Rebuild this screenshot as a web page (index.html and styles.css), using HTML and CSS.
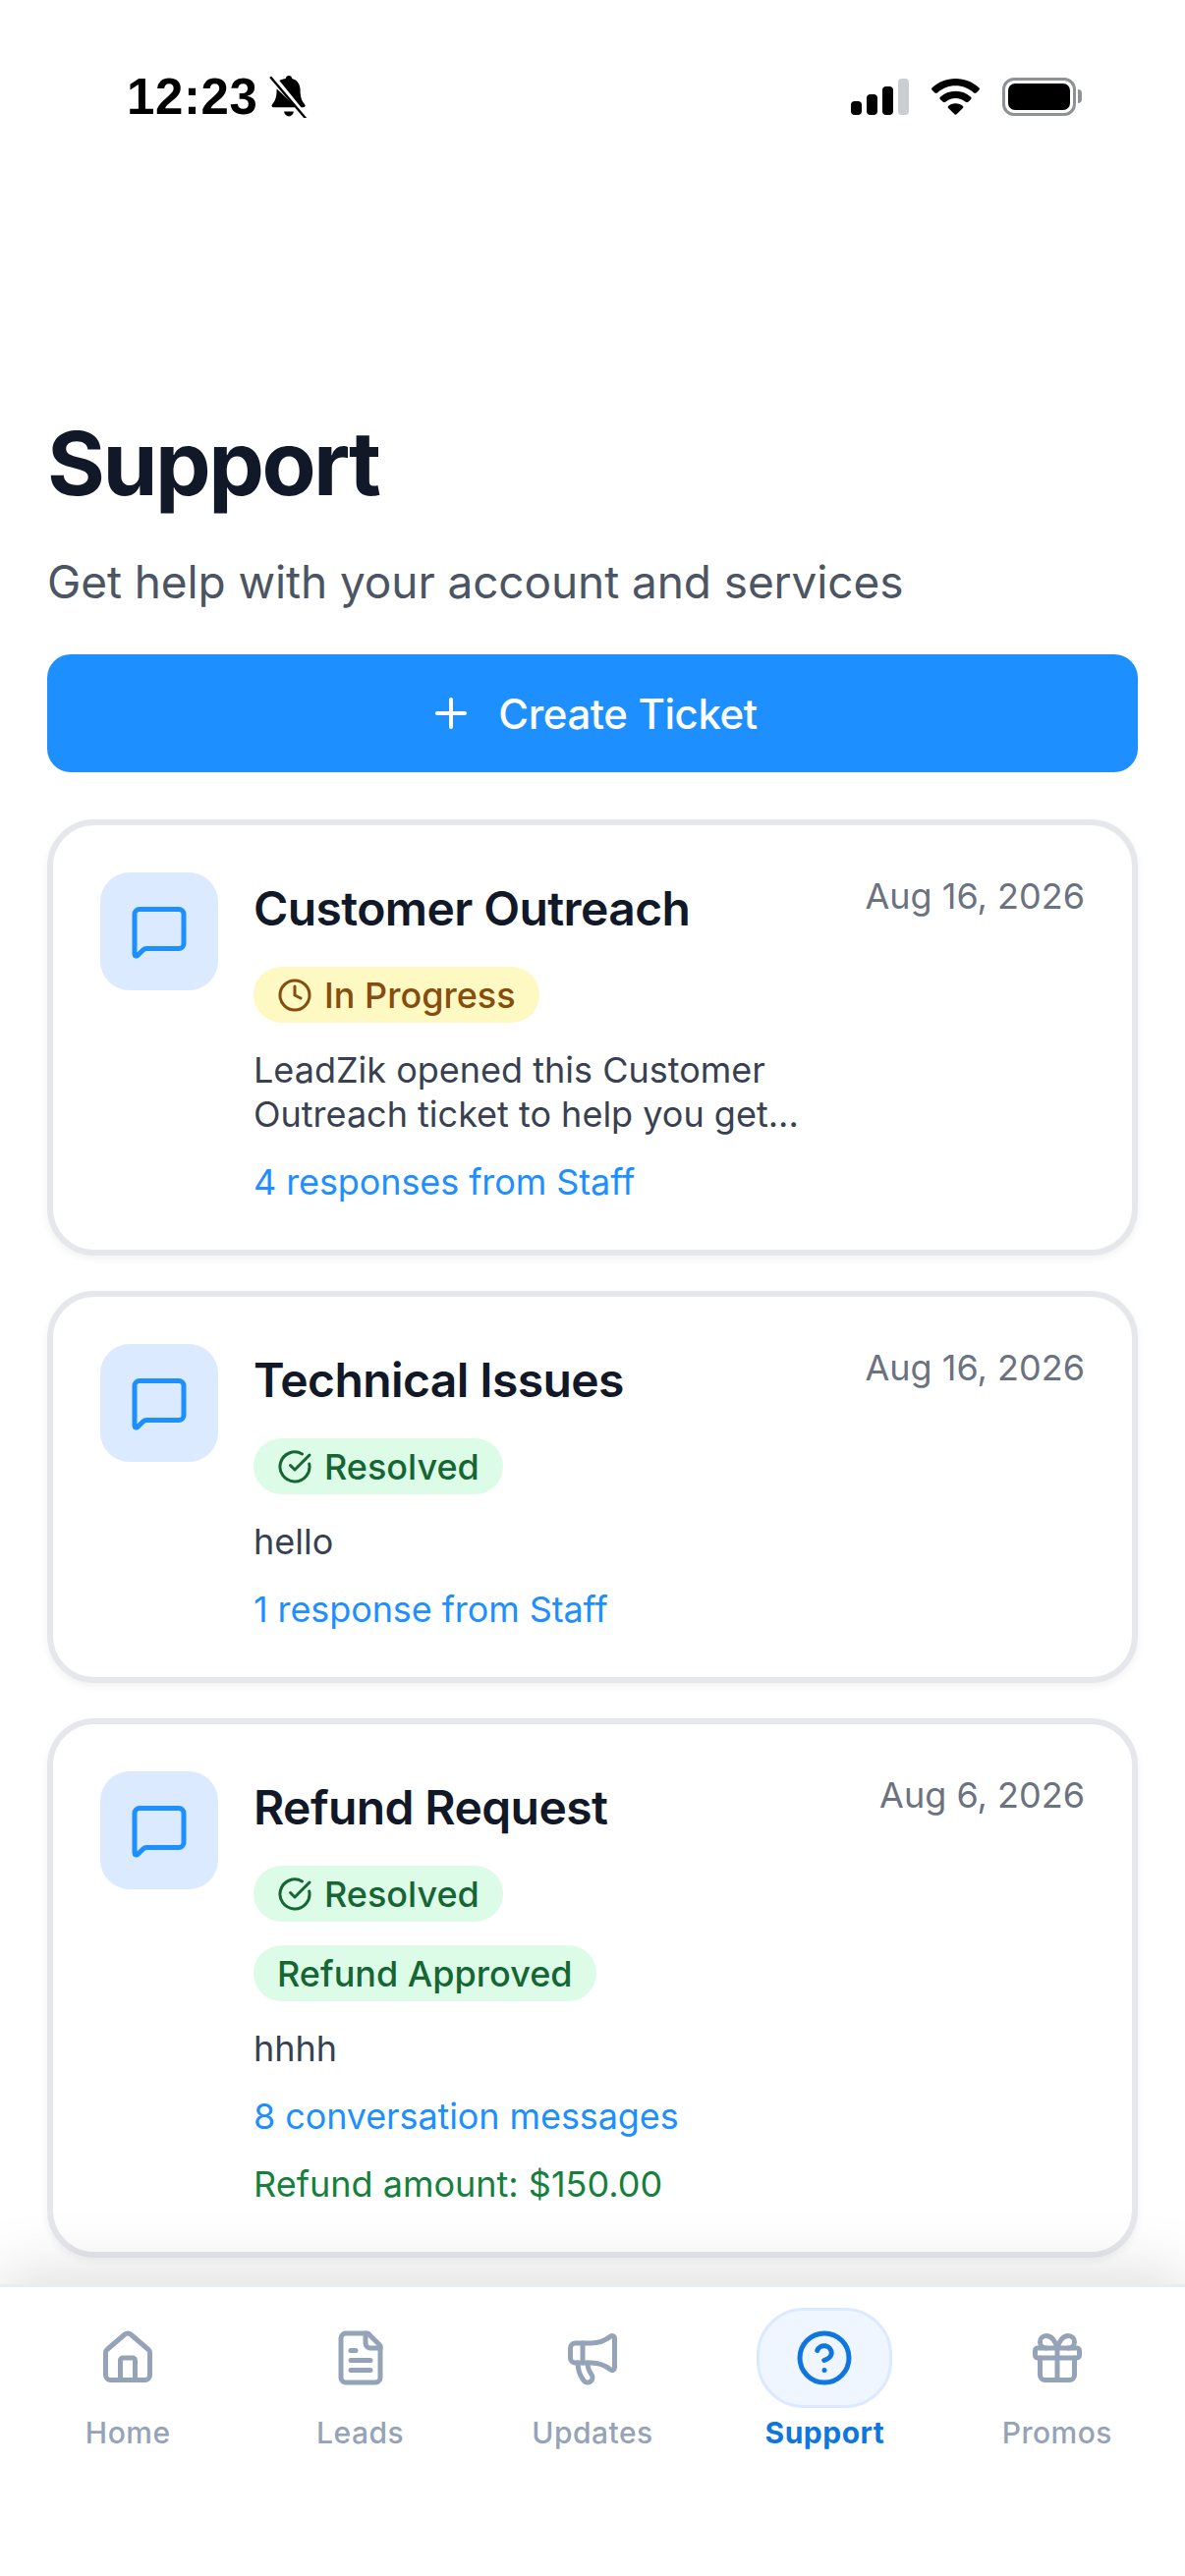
FILE: index.html
```html
<!DOCTYPE html>
<html lang="en">
<head>
    <meta charset="UTF-8">
    <meta name="viewport" content="width=device-width, initial-scale=1.0">
    <title>Support</title>
    <link rel="stylesheet" href="styles.css">
</head>
<body>
    <div class="status-bar">
        <div class="status-left">
            <span class="clock">12:23</span>
            <svg class="bell" viewBox="1.500 0 17 20.500" width="40" height="44">
                <path d="M10 .5c.9 0 1.400.6 1.500 1.400 2.500.6 3.900 2.700 3.900 5.600 0 3.600.9 5.200 2.100 6.600.5.600.2 1.400-.6 1.400h-1.100L5.500 2.800C6.300 2.300 7.500 2 8.500 1.900 8.600 1.100 9.100.5 10 .5z" fill="#000"/>
                <path d="M4.300 6.700c-.1.300-.1.600-.1.800 0 3.600-.9 5.200-2.100 6.600-.5.600-.2 1.400.6 1.400h10.900z" fill="#000"/>
                <path d="M7.700 17.500h4.600c-.2 1.400-1.200 2.300-2.300 2.300s-2.100-.9-2.300-2.300z" fill="#000"/>
                <path d="M1.200 1l17 20" stroke="#000" stroke-width="1.100" fill="none"/>
            </svg>
        </div>
        <div class="status-right">
            <div class="signal">
                <span class="bar bar-1"></span>
                <span class="bar bar-2"></span>
                <span class="bar bar-3"></span>
                <span class="bar bar-4"></span>
            </div>
            <svg class="wifi" viewBox="0 0 24 18" width="51" height="37" preserveAspectRatio="none">
                <path d="M12 0C7.500 0 3.700 1.700.8 4.500c-.4.300-.4.800 0 1.200L2.100 7c.3.300.8.300 1.200 0C5.600 4.800 8.600 3.500 12 3.500S18.400 4.800 20.700 7c.4.300.9.300 1.200 0l1.300-1.300c.4-.4.400-.9 0-1.200C20.300 1.700 16.500 0 12 0z" fill="#000"/>
                <path d="M12 6.200c-2.900 0-5.400 1.100-7.300 2.900-.4.300-.4.800 0 1.200l1.300 1.300c.3.300.8.300 1.200 0 1.300-1.100 3-1.900 4.800-1.900s3.500.8 4.800 1.900c.4.300.9.300 1.200 0l1.300-1.300c.4-.4.400-.9 0-1.200-1.900-1.800-4.400-2.900-7.300-2.900z" fill="#000"/>
                <path d="M12 12.300c-1.400 0-2.600.5-3.500 1.300-.3.300-.3.700 0 1l3 3c.3.300.7.300 1 0l3-3c.3-.3.300-.7 0-1-.9-.8-2.100-1.300-3.500-1.300z" fill="#000"/>
            </svg>
            <div class="battery">
                <div class="battery-shell"><div class="battery-fill"></div></div>
                <div class="battery-cap"></div>
            </div>
        </div>
    </div>

    <main class="content">
        <h1>Support</h1>
        <p class="subtitle">Get help with your account and services</p>

        <button class="create-btn" type="button">
            <svg viewBox="0 0 24 24" width="48" height="48" fill="none" stroke="#fff" stroke-width="2" stroke-linecap="round">
                <path d="M5 12h14M12 5v14"/>
            </svg>
            <span>Create Ticket</span>
        </button>

        <article class="ticket">
            <div class="ticket-icon">
                <svg viewBox="0 0 24 24" width="60" height="60" fill="none" stroke="#1e8fff" stroke-width="2" stroke-linecap="round" stroke-linejoin="round">
                    <path d="M22 17a2 2 0 0 1-2 2H6.828a2 2 0 0 0-1.414.586l-2.202 2.202A.71.71 0 0 1 2 21.286V5a2 2 0 0 1 2-2h16a2 2 0 0 1 2 2z"/>
                </svg>
            </div>
            <div class="ticket-body">
                <div class="ticket-head">
                    <h2>Customer Outreach</h2>
                    <span class="date">Aug 16, 2026</span>
                </div>
                <div class="badge badge-progress">
                    <svg viewBox="0 0 24 24" width="36" height="36" fill="none" stroke="currentColor" stroke-width="2" stroke-linecap="round" stroke-linejoin="round">
                        <circle cx="12" cy="12" r="10"/><path d="M12 6v6l4 2"/>
                    </svg>
                    <span>In Progress</span>
                </div>
                <p class="desc">LeadZik opened this Customer<br>Outreach ticket to help you get...</p>
                <p class="link">4 responses from Staff</p>
            </div>
        </article>

        <article class="ticket">
            <div class="ticket-icon">
                <svg viewBox="0 0 24 24" width="60" height="60" fill="none" stroke="#1e8fff" stroke-width="2" stroke-linecap="round" stroke-linejoin="round">
                    <path d="M22 17a2 2 0 0 1-2 2H6.828a2 2 0 0 0-1.414.586l-2.202 2.202A.71.71 0 0 1 2 21.286V5a2 2 0 0 1 2-2h16a2 2 0 0 1 2 2z"/>
                </svg>
            </div>
            <div class="ticket-body">
                <div class="ticket-head">
                    <h2>Technical Issues</h2>
                    <span class="date">Aug 16, 2026</span>
                </div>
                <div class="badge badge-resolved">
                    <svg viewBox="0 0 24 24" width="36" height="36" fill="none" stroke="currentColor" stroke-width="2" stroke-linecap="round" stroke-linejoin="round">
                        <path d="M21.800 10A10 10 0 1 1 17 3.300"/><path d="m9 11 3 3L22 4"/>
                    </svg>
                    <span>Resolved</span>
                </div>
                <p class="desc">hello</p>
                <p class="link">1 response from Staff</p>
            </div>
        </article>

        <article class="ticket">
            <div class="ticket-icon">
                <svg viewBox="0 0 24 24" width="60" height="60" fill="none" stroke="#1e8fff" stroke-width="2" stroke-linecap="round" stroke-linejoin="round">
                    <path d="M22 17a2 2 0 0 1-2 2H6.828a2 2 0 0 0-1.414.586l-2.202 2.202A.71.71 0 0 1 2 21.286V5a2 2 0 0 1 2-2h16a2 2 0 0 1 2 2z"/>
                </svg>
            </div>
            <div class="ticket-body">
                <div class="ticket-head">
                    <h2>Refund Request</h2>
                    <span class="date">Aug 6, 2026</span>
                </div>
                <div class="badge badge-resolved">
                    <svg viewBox="0 0 24 24" width="36" height="36" fill="none" stroke="currentColor" stroke-width="2" stroke-linecap="round" stroke-linejoin="round">
                        <path d="M21.800 10A10 10 0 1 1 17 3.300"/><path d="m9 11 3 3L22 4"/>
                    </svg>
                    <span>Resolved</span>
                </div>
                <div class="badge badge-resolved">
                    <span>Refund Approved</span>
                </div>
                <p class="desc">hhhh</p>
                <p class="link">8 conversation messages</p>
                <p class="refund">Refund amount: $150.00</p>
            </div>
        </article>
    </main>

    <nav class="tabbar">
        <div class="tab">
            <div class="tab-icon">
                <svg viewBox="0 0 24 24" width="60" height="60" fill="none" stroke="currentColor" stroke-width="2" stroke-linecap="round" stroke-linejoin="round">
                    <path d="M15 21v-8a1 1 0 0 0-1-1h-4a1 1 0 0 0-1 1v8"/>
                    <path d="M3 10a2 2 0 0 1 .7-1.500l7-6a2 2 0 0 1 2.600 0l7 6a2 2 0 0 1 .7 1.500v9a2 2 0 0 1-2 2H5a2 2 0 0 1-2-2z"/>
                </svg>
            </div>
            <span>Home</span>
        </div>
        <div class="tab">
            <div class="tab-icon">
                <svg viewBox="0 0 24 24" width="60" height="60" fill="none" stroke="currentColor" stroke-width="2" stroke-linecap="round" stroke-linejoin="round">
                    <path d="M15 2H6a2 2 0 0 0-2 2v16a2 2 0 0 0 2 2h12a2 2 0 0 0 2-2V7z"/>
                    <path d="M14 2v4a2 2 0 0 0 2 2h4"/>
                    <path d="M10 9H8M16 13H8M16 17H8"/>
                </svg>
            </div>
            <span>Leads</span>
        </div>
        <div class="tab">
            <div class="tab-icon">
                <svg viewBox="0 0 24 24" width="60" height="60" fill="none" stroke="currentColor" stroke-width="2" stroke-linecap="round" stroke-linejoin="round">
                    <path d="M11 6a13 13 0 0 0 8.400-2.800A1 1 0 0 1 21 4v12a1 1 0 0 1-1.600.8A13 13 0 0 0 11 14H5a2 2 0 0 1-2-2V8a2 2 0 0 1 2-2z"/>
                    <path d="M6 14a12 12 0 0 0 2.400 7.200 2 2 0 0 0 3.200-2.400A8 8 0 0 1 10 14"/>
                    <path d="M8 6v8"/>
                </svg>
            </div>
            <span>Updates</span>
        </div>
        <div class="tab tab-active">
            <div class="tab-icon">
                <svg viewBox="0 0 24 24" width="60" height="60" fill="none" stroke="currentColor" stroke-width="2" stroke-linecap="round" stroke-linejoin="round">
                    <circle cx="12" cy="12" r="10"/>
                    <path d="M9.100 9a3 3 0 0 1 5.800 1c0 2-3 3-3 3"/>
                    <path d="M12 17h.01"/>
                </svg>
            </div>
            <span>Support</span>
        </div>
        <div class="tab">
            <div class="tab-icon">
                <svg viewBox="0 0 24 24" width="60" height="60" fill="none" stroke="currentColor" stroke-width="2" stroke-linecap="round" stroke-linejoin="round">
                    <rect x="3" y="8" width="18" height="4" rx="1"/>
                    <path d="M12 8v13"/>
                    <path d="M19 12v7a2 2 0 0 1-2 2H7a2 2 0 0 1-2-2v-7"/>
                    <path d="M7.500 8a2.500 2.500 0 0 1 0-5A4.800 8 0 0 1 12 8a4.800 8 0 0 1 4.500-5 2.500 2.500 0 0 1 0 5"/>
                </svg>
            </div>
            <span>Promos</span>
        </div>
    </nav>
</body>
</html>
```

FILE: styles.css
```css
* {
    box-sizing: border-box;
}

html, body {
    margin: 0;
    padding: 0;
}

body {
    position: relative;
    width: 1206px;
    height: 2622px;
    overflow: hidden;
    background: #fff;
    font-family: Inter, "Liberation Sans", sans-serif;
    color: #111827;
}

/* status bar */
.status-bar {
    display: flex;
    justify-content: space-between;
    align-items: center;
    height: 196px;
    padding: 0 105px 0 129px;
}

.status-left {
    display: flex;
    align-items: center;
    gap: 12px;
}

.clock {
    font-family: "Liberation Sans", sans-serif;
    font-size: 51px;
    font-weight: 700;
    color: #000;
    letter-spacing: 0.6px;
}

.status-right {
    display: flex;
    align-items: center;
    gap: 22px;
}

.signal {
    display: flex;
    align-items: flex-end;
    gap: 5px;
    height: 37px;
}

.bar {
    width: 11px;
    border-radius: 4px;
    background: #000;
}

.bar-1 { height: 14px; }
.bar-2 { height: 21px; }
.bar-3 { height: 29px; }
.bar-4 { height: 37px; background: #c9ced2; }

.battery {
    display: flex;
    align-items: center;
    gap: 2px;
}

.battery-shell {
    width: 75px;
    height: 39px;
    padding: 3px;
    border: 3px solid #8e9296;
    border-radius: 12px;
}

.battery-fill {
    width: 100%;
    height: 100%;
    background: #000;
    border-radius: 7px;
}

.battery-cap {
    width: 4px;
    height: 14px;
    background: #8e9296;
    border-radius: 0 4px 4px 0;
}

/* page content */
.content {
    padding: 222px 48px 0;
}

h1 {
    margin: 0;
    font-size: 90px;
    line-height: 108px;
    font-weight: 700;
    letter-spacing: -2.5px;
    color: #111827;
}

.subtitle {
    margin: 30px 0 0;
    font-size: 46px;
    line-height: 72px;
    letter-spacing: -0.1px;
    color: #4b5563;
}

.create-btn {
    display: flex;
    justify-content: center;
    align-items: center;
    gap: 24px;
    width: 100%;
    height: 120px;
    margin-top: 38px;
    padding: 0;
    border: none;
    border-radius: 24px;
    background: #1e8fff;
    color: #fff;
    font-family: inherit;
    font-size: 42px;
    font-weight: 500;
    letter-spacing: -0.4px;
}

.ticket {
    display: flex;
    gap: 36px;
    margin-top: 48px;
    padding: 48px 48px 46px;
    background: #fff;
    border: 6px solid #e5e7eb;
    border-radius: 48px;
    box-shadow: 0 3px 9px rgba(0, 0, 0, 0.06);
}

.ticket + .ticket {
    margin-top: 36px;
}

.ticket-icon {
    display: flex;
    justify-content: center;
    align-items: center;
    flex-shrink: 0;
    width: 120px;
    height: 120px;
    border-radius: 30px;
    background: #dbeafe;
}

.ticket-body {
    flex: 1;
    min-width: 0;
}

.ticket-head {
    display: flex;
    justify-content: space-between;
    align-items: flex-start;
}

h2 {
    margin: 0;
    padding-top: 2px;
    font-size: 48px;
    line-height: 70px;
    font-weight: 600;
    letter-spacing: -0.6px;
    color: #111827;
}

.date {
    font-size: 36px;
    line-height: 48px;
    color: #6b7280;
}

.badge {
    display: flex;
    align-items: center;
    gap: 12px;
    width: fit-content;
    height: 57px;
    margin-top: 24px;
    padding: 0 24px;
    border-radius: 30px;
    font-size: 36px;
    font-weight: 500;
}

.badge-progress {
    background: #fef9c3;
    color: #854d0e;
}

.badge-resolved {
    background: #dcfce7;
    color: #166534;
}

.desc {
    margin: 26px 0 0;
    font-size: 36px;
    line-height: 45px;
    color: #374151;
}

.link {
    margin: 24px 0 0;
    font-size: 36px;
    line-height: 45px;
    letter-spacing: -0.1px;
    color: #1e8fff;
}

.refund {
    margin: 24px 0 0;
    font-size: 36px;
    line-height: 45px;
    color: #15803d;
}

/* bottom tabs */
.tabbar {
    position: absolute;
    left: 0;
    right: 0;
    bottom: 0;
    height: 297px;
    display: flex;
    padding: 21px 12px 0;
    background: #fff;
    border-top: 3px solid #e8edf4;
    box-shadow: 0 -12px 60px rgba(0, 0, 0, 0.13);
}

.tab {
    flex: 1;
    display: flex;
    flex-direction: column;
    align-items: center;
    font-size: 30px;
    line-height: 36px;
    font-weight: 500;
    color: #94a3b8;
    letter-spacing: 0.5px;
}

.tab-icon {
    display: flex;
    justify-content: center;
    align-items: center;
    width: 120px;
    height: 102px;
    margin-bottom: 7px;
}

.tab-active {
    color: #0f76e0;
    font-weight: 700;
}

.tab-active .tab-icon {
    width: 138px;
    background: #eff6ff;
    border: 3px solid #dbeafe;
    border-radius: 48px;
}
```
